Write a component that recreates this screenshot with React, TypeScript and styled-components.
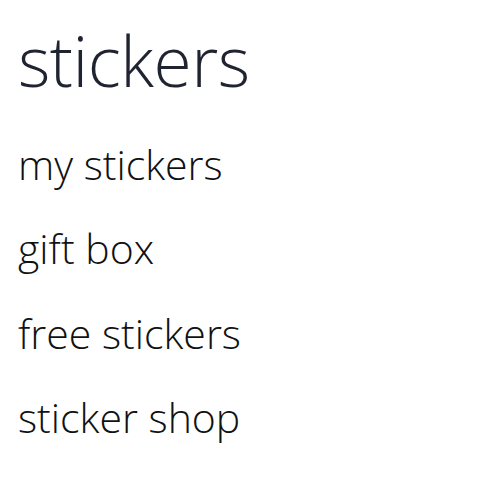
import styled, { createGlobalStyle } from 'styled-components';

const GlobalStyle = createGlobalStyle`
  html, body {
    margin: 0;
    padding: 0;
    background: #ffffff;
  }
  body {
    font-family: 'Open Sans', 'Noto Sans', sans-serif;
  }
`;

const Page = styled.div`
  width: 500px;
  height: 501px;
  padding: 20px 0 0 18px;
  box-sizing: border-box;
  overflow: hidden;
`;

const Title = styled.h1`
  margin: 0;
  font-size: 69.5px;
  font-weight: 300;
  line-height: 80px;
  color: #1f2430;
  letter-spacing: -0.5px;
`;

const MenuList = styled.ul`
  list-style: none;
  margin: 22px 0 0;
  padding: 0;
  display: flex;
  flex-direction: column;
`;

const MenuItem = styled.li`
  font-size: 41px;
  font-weight: 300;
  line-height: 84.3px;
  color: #111111;
`;

const items = ['my stickers', 'gift box', 'free stickers', 'sticker shop'];

export default function App() {
  return (
    <>
      <GlobalStyle />
      <Page>
        <Title>stickers</Title>
        <MenuList>
          {items.map((item) => (
            <MenuItem key={item}>{item}</MenuItem>
          ))}
        </MenuList>
      </Page>
    </>
  );
}
